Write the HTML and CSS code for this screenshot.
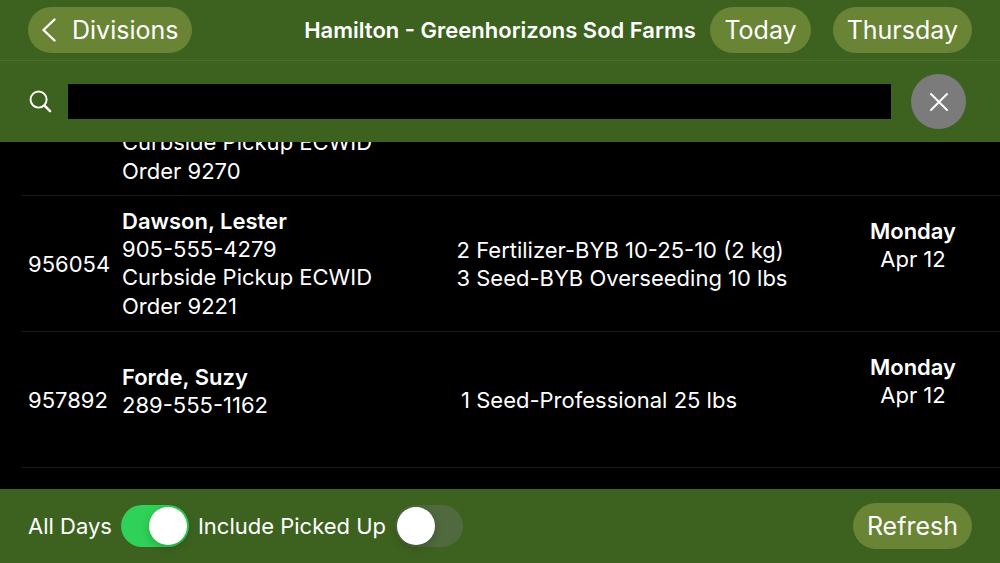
FILE: index.html
```html
<!DOCTYPE html>
<html lang="en">
<head>
    <meta charset="UTF-8">
    <meta name="viewport" content="width=device-width, initial-scale=1.0">
    <title>Hamilton - Greenhorizons Sod Farms</title>
    <link rel="stylesheet" href="styles.css">
</head>
<body>
    <header class="navbar">
        <div class="nav-left">
            <button class="pill back" type="button">
                <svg class="chevron" viewBox="0 0 14 24" aria-hidden="true"><path d="M12.5 1.5 1.5 12l11 10.5"/></svg>
                Divisions
            </button>
        </div>
        <h1 class="title">Hamilton - Greenhorizons Sod Farms</h1>
        <div class="nav-right">
            <button class="pill" type="button">Today</button>
            <button class="pill" type="button">Thursday</button>
        </div>
    </header>

    <form class="search">
        <label class="search-label" for="search" aria-label="Search">
            <svg class="search-icon" viewBox="0 0 24 24" aria-hidden="true"><circle cx="10" cy="10" r="8.4"/><path d="m16.2 16.2 5.8 5.8" stroke-width="2.6"/></svg>
        </label>
        <input class="search-input" id="search" type="text">
        <button class="clear" type="reset" aria-label="Clear">
            <svg class="clear-icon" viewBox="0 0 20 20" aria-hidden="true"><path d="m2 2 16 16M18 2 2 18"/></svg>
        </button>
    </form>

    <main class="order-list" id="orderList">
        <table class="orders">
            <tbody>
                <tr>
                    <td class="number"></td>
                    <td class="contact last">
                        <div class="note">Curbside Pickup ECWID<br>Order 9270</div>
                    </td>
                    <td class="items"></td>
                    <td class="date"></td>
                </tr>
                <tr>
                    <td class="number">956054</td>
                    <td class="contact">
                        <strong>Dawson, Lester</strong>
                        <div>905-555-4279</div>
                        <div class="note">Curbside Pickup ECWID<br>Order 9221</div>
                    </td>
                    <td class="items">
                        <div><span class="qty">2</span> Fertilizer-BYB 10-25-10 (2 kg)</div>
                        <div><span class="qty">3</span> Seed-BYB Overseeding 10 lbs</div>
                    </td>
                    <td class="date"><strong>Monday</strong>Apr 12</td>
                </tr>
                <tr>
                    <td class="number">957892</td>
                    <td class="contact">
                        <strong>Forde, Suzy</strong>
                        <div>289-555-1162</div>
                        <div class="note"></div>
                    </td>
                    <td class="items">
                        <div><span class="qty">1</span> Seed-Professional 25 lbs</div>
                    </td>
                    <td class="date"><strong>Monday</strong>Apr 12</td>
                </tr>
            </tbody>
        </table>
    </main>

    <footer class="toolbar">
        <label for="allDays">All Days</label>
        <input class="switch" id="allDays" type="checkbox" role="switch" checked>
        <label for="pickedUp">Include Picked Up</label>
        <input class="switch" id="pickedUp" type="checkbox" role="switch">
        <button class="pill refresh" type="button">Refresh</button>
    </footer>

    <script>
        // open at the end of the list
        const orderList = document.getElementById('orderList');
        orderList.scrollTop = orderList.scrollHeight;
    </script>
</body>
</html>
```
FILE: styles.css
```css
* {
    margin: 0;
    padding: 0;
    box-sizing: border-box;
}

body {
    height: 100vh;
    display: flex;
    flex-direction: column;
    background: #000;
    color: #fff;
    font-family: Inter, "Liberation Sans", sans-serif;
    font-size: 22px;
    line-height: 28px;
}

button,
input {
    font: inherit;
    color: inherit;
    border: none;
}

svg {
    display: block;
    fill: none;
    stroke: #fff;
    stroke-width: 2;
    stroke-linecap: round;
    stroke-linejoin: round;
}

.navbar {
    display: grid;
    grid-template-columns: 1fr auto 1fr;
    align-items: center;
    padding: 7px 28px;
    background: #3d621f;
    border-bottom: 1px solid #4c6e2b;
}

.title {
    font-size: 22px;
    font-weight: 600;
    white-space: nowrap;
}

.nav-right {
    display: flex;
    justify-content: flex-end;
    gap: 22px;
}

.pill {
    display: flex;
    align-items: center;
    height: 46px;
    padding: 0 14px;
    border-radius: 23px;
    background: #698434;
    font-size: 25px;
    white-space: nowrap;
}

.back {
    gap: 16px;
}

.chevron {
    width: 14px;
    height: 24px;
    stroke-width: 2.4;
}

.search {
    display: flex;
    align-items: center;
    gap: 16px;
    padding: 13px 34px 13px 29px;
    background: #3d621f;
}

.search-icon {
    width: 23px;
    height: 23px;
}

.search-input {
    flex: 1;
    min-width: 0;
    height: 35px;
    padding: 0 8px;
    background: #000;
    outline: none;
}

.clear {
    display: flex;
    align-items: center;
    justify-content: center;
    width: 55px;
    height: 55px;
    margin-left: 4px;
    border-radius: 50%;
    background: #7b7b7b;
}

.clear-icon {
    width: 20px;
    height: 20px;
}

.order-list {
    flex: 1;
    min-height: 0;
    padding: 0 0 21px 22px;
    overflow-y: auto;
    scrollbar-width: none;
}

.orders {
    width: 100%;
    table-layout: fixed;
    border-collapse: collapse;
}

.orders td {
    height: 136px;
    padding-top: 2px;
    border-bottom: 1px solid #1c1c1e;
    vertical-align: middle;
}

.orders strong {
    display: block;
    font-weight: 600;
}

.orders .number {
    width: 100px;
    padding-left: 6px;
}

.orders .contact {
    width: 332px;
}

.orders .last {
    padding-bottom: 9px;
    vertical-align: bottom;
}

.note {
    min-height: 18px;
    line-height: 29px;
}

.qty {
    display: inline-block;
    width: 16px;
    text-align: right;
}

.orders .date {
    width: 174px;
    padding-top: 21px;
    text-align: center;
    vertical-align: top;
}

.toolbar {
    display: flex;
    align-items: center;
    gap: 9px;
    padding: 14px 28px;
    background: #3d621f;
}

.switch {
    appearance: none;
    width: 68px;
    height: 42px;
    padding: 2px;
    border-radius: 21px;
    background: #50693f;
}

.switch::before {
    content: "";
    display: block;
    width: 38px;
    height: 38px;
    border-radius: 50%;
    background: #fff;
    box-shadow: 0 3px 8px rgba(0,0,0,0.2);
}

.switch:checked {
    background: #30d158;
}

.switch:checked::before {
    margin-left: auto;
}

.refresh {
    margin-left: auto;
}
```
